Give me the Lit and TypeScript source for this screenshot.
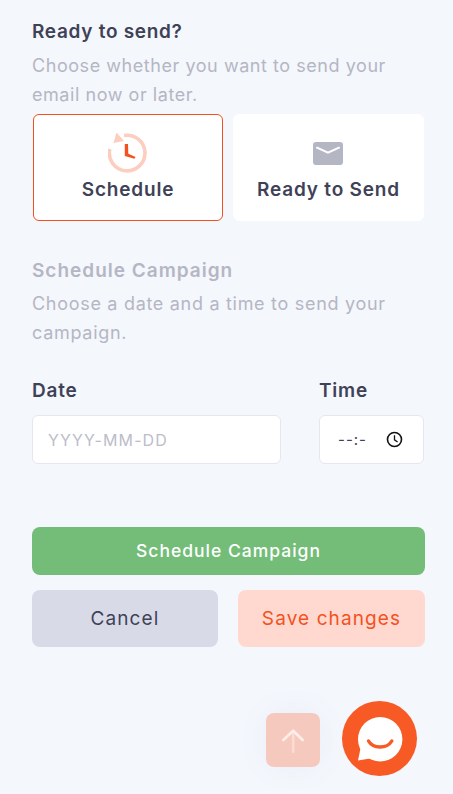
import { LitElement, html, css } from 'lit';
import { customElement } from 'lit/decorators.js';

@customElement('app-root')
export class AppRoot extends LitElement {
  static styles = css`
    :host {
      display: block;
      height: 794px;
      overflow: hidden;
      position: relative;
      background: #f4f7fc;
      font-family: Inter, "Noto Sans", sans-serif;
      color: #3f4257;
    }
    * {
      box-sizing: border-box;
    }
    .page {
      padding: 18px 28px 0 32px;
    }
    h2 {
      margin: 0;
      font-size: 19px;
      line-height: 28px;
      font-weight: 600;
      letter-spacing: 0.7px;
    }
    h2.muted {
      color: #b5b6c4;
      letter-spacing: 1px;
    }
    p {
      margin: 5px 0 0;
      font-size: 18px;
      line-height: 29px;
      color: #b5b6c4;
      letter-spacing: 0.55px;
    }
    .choices {
      display: grid;
      grid-template-columns: 190px 191px;
      gap: 10px;
      margin: 5px 0 0 1px;
    }
    .choice {
      height: 107px;
      background: #fff;
      border: 1px solid #fff;
      border-radius: 6px;
      display: flex;
      flex-direction: column;
      align-items: center;
      font-size: 19px;
      font-weight: 600;
      letter-spacing: 0.8px;
    }
    .choice.active {
      border-color: #f4511e;
    }
    .icon {
      height: 40px;
      margin-top: 18px;
      display: flex;
      align-items: center;
    }
    .choice span {
      margin-top: 4px;
      line-height: 26px;
    }
    .envelope {
      margin-right: 1px;
    }
    .schedule {
      margin-top: 36px;
    }
    .schedule p {
      margin-top: 4px;
      letter-spacing: 0.7px;
    }
    .fields {
      display: grid;
      grid-template-columns: 249px 105px;
      justify-content: space-between;
      margin-top: 30px;
      padding-right: 1px;
    }
    label {
      display: block;
      font-size: 19px;
      line-height: 28px;
      font-weight: 600;
      letter-spacing: 0.8px;
      margin-bottom: 10px;
    }
    .input {
      height: 49px;
      width: 100%;
      background: #fff;
      border: 1px solid #e4e7f0;
      border-radius: 6px;
      font-family: inherit;
      font-size: 16px;
      letter-spacing: 1.1px;
      color: #3f4257;
      padding: 0 15px;
      outline: none;
    }
    .input::placeholder {
      color: #bcbdca;
      opacity: 1;
    }
    .time {
      display: flex;
      align-items: center;
      justify-content: space-between;
      padding: 0 20px 0 18px;
      font-size: 15px;
      letter-spacing: 1px;
    }
    .actions {
      display: grid;
      grid-template-columns: 186px 187px;
      justify-content: space-between;
      gap: 15px 0;
      margin-top: 63px;
    }
    button {
      border: 0;
      border-radius: 8px;
      font-family: inherit;
      cursor: pointer;
    }
    .primary {
      grid-column: 1 / -1;
      height: 48px;
      padding-bottom: 2px;
      background: #73bd78;
      color: #fff;
      font-size: 17.5px;
      font-weight: 500;
      letter-spacing: 1px;
    }
    .secondary {
      height: 57px;
      font-size: 19px;
      letter-spacing: 1.1px;
    }
    .cancel {
      background: #d8dbe7;
      color: #3f4257;
    }
    .save {
      background: #ffd9cf;
      color: #f4511e;
    }
    .to-top {
      position: absolute;
      left: 266px;
      top: 713px;
      width: 54px;
      height: 54px;
      border-radius: 8px;
      background: #f6c9be;
      display: flex;
      align-items: center;
      justify-content: center;
      box-shadow: 0 0 30px rgba(120, 130, 170, 0.07);
    }
    .chat {
      position: absolute;
      left: 342px;
      top: 701px;
      width: 75px;
      height: 75px;
      border-radius: 50%;
      background: #f75a24;
      display: flex;
      align-items: center;
      justify-content: center;
    }
  `;

  render() {
    return html`
      <div class="page">
        <h2>Ready to send?</h2>
        <p>Choose whether you want to send your email now or later.</p>
        <div class="choices">
          <div class="choice active">
            <div class="icon">
              <svg width="40" height="40" viewBox="0 0 40 40" fill="none">
                <path d="M1.8 16 A17.8 17.8 0 1 0 16 2.5" stroke="#fdcdbf" stroke-width="3.6" />
                <path d="M8.5 -0.5 L5.5 10 L16 8 Z" fill="#fdcdbf" />
                <path d="M16.8 11 L20 11 L20.3 20.8 L27.5 24 L26.5 25.8 L16.8 23 Z" fill="#f4511e" />
              </svg>
            </div>
            <span>Schedule</span>
          </div>
          <div class="choice">
            <div class="icon">
              <svg class="envelope" width="30" height="23" viewBox="0 0 30 23">
                <rect width="30" height="23" rx="3" fill="#b5b6c4" />
                <path d="M4 5.7 L15 10.7 L26 5.7" fill="none" stroke="#fff" stroke-width="2" stroke-linecap="round" />
              </svg>
            </div>
            <span>Ready to Send</span>
          </div>
        </div>

        <div class="schedule">
          <h2 class="muted">Schedule Campaign</h2>
          <p>Choose a date and a time to send your campaign.</p>
        </div>

        <div class="fields">
          <div>
            <label>Date</label>
            <input class="input" placeholder="YYYY-MM-DD" />
          </div>
          <div>
            <label>Time</label>
            <div class="input time">
              <span>--:-</span>
              <svg width="17" height="17" viewBox="0 0 17 17" fill="none" stroke="#111" stroke-width="1.6">
                <circle cx="8.5" cy="8.5" r="7" />
                <path d="M8.5 4.2 V8.8 L11.6 11" stroke-width="1.3" />
              </svg>
            </div>
          </div>
        </div>

        <div class="actions">
          <button class="primary">Schedule Campaign</button>
          <button class="secondary cancel">Cancel</button>
          <button class="secondary save">Save changes</button>
        </div>
      </div>

      <div class="to-top">
        <svg width="24" height="26" viewBox="0 0 24 26" fill="none" stroke-linecap="round" stroke-width="2.6">
          <path d="M12.2 6 V24.7" stroke="#fbdcd4" />
          <path d="M2.3 13 L12.2 3.7 L21.7 13" stroke="#fdeee9" stroke-linejoin="round" />
        </svg>
      </div>
      <div class="chat">
        <svg width="46" height="46" viewBox="0 0 46 46">
          <circle cx="23.2" cy="23.3" r="22.2" fill="#fff" />
          <path d="M1 44.5 L4 30 L16 42 Z" fill="#fff" />
          <path d="M11.5 25 C16 33 30 33 34.8 25" fill="none" stroke="#f75a24" stroke-width="3.4" stroke-linecap="round" />
        </svg>
      </div>
    `;
  }
}

declare global {
  interface HTMLElementTagNameMap {
    'app-root': AppRoot;
  }
}
